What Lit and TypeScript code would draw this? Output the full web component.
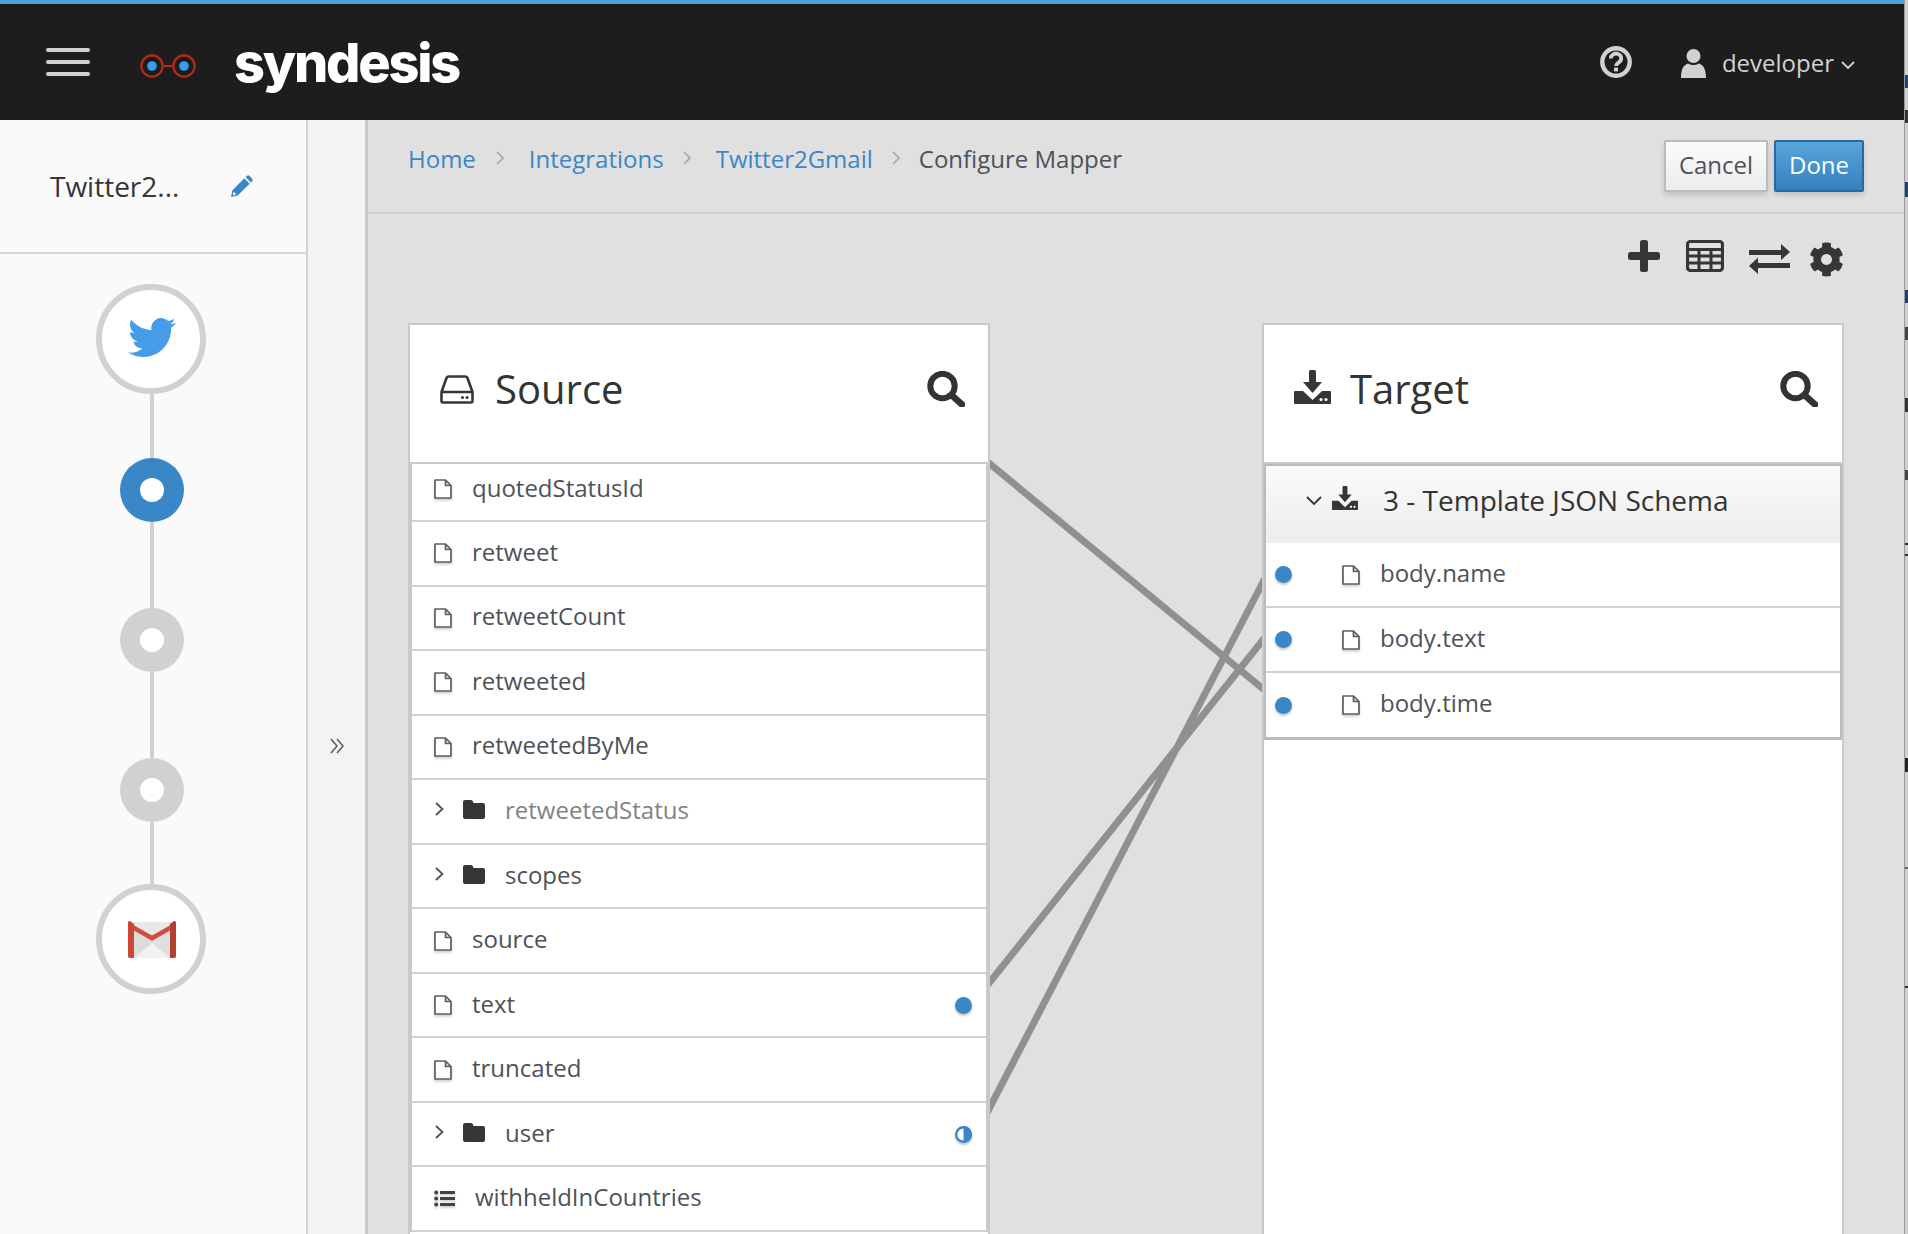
import { LitElement, html, css, svg } from "lit";
import { customElement } from "lit/decorators.js";

const fileIcon = html`<svg class="file" viewBox="0 0 18 20"><path d="M1 1H11.5L17 6.5V19H1Z M11.5 1V6.5H17" fill="#fff" stroke="#5b5f63" stroke-width="1.7" stroke-linejoin="round"/></svg>`;
const folderIcon = html`<svg class="folder" viewBox="0 0 22 19"><path d="M2 0H8Q9.5 0 10 1.5L10.5 3H20Q22 3 22 5V17Q22 19 20 19H2Q0 19 0 17V2Q0 0 2 0Z" fill="#363636"/></svg>`;
const chevronRight = html`<svg class="chev" viewBox="0 0 9 14"><path d="M1 1L7.5 7L1 13" fill="none" stroke="#4d5258" stroke-width="1.8"/></svg>`;
const listIcon = html`<svg class="list" viewBox="0 0 21 17"><g fill="#3f4246"><circle cx="2.2" cy="2.5" r="2"/><circle cx="2.2" cy="8.5" r="2"/><circle cx="2.2" cy="14.5" r="2"/><rect x="6" y="1" width="15" height="3"/><rect x="6" y="7" width="15" height="3"/><rect x="6" y="13" width="15" height="3"/></g></svg>`;
const searchIcon = html`<svg class="search" viewBox="0 0 38 36"><circle cx="15.5" cy="15" r="12.2" fill="none" stroke="#333" stroke-width="6"/><path d="M25 24.5L35 33.5" stroke="#333" stroke-width="6.5" stroke-linecap="round"/></svg>`;
const downloadIcon = (cls: string) => html`<svg class=${cls} viewBox="0 0 37 34"><g fill="#363636"><path d="M15 1.5Q15 0 16.5 0H20.5Q22 0 22 1.5V12H28L18.5 23L9 12H15Z"/><path d="M1 21H9L18.5 30L28 21H36Q37 21 37 22V33Q37 34 36 34H1Q0 34 0 33V22Q0 21 1 21Z"/></g><circle cx="27" cy="29.5" r="1.6" fill="#fff"/><circle cx="32" cy="29.5" r="1.6" fill="#fff"/></svg>`;

type Row = { name: string; kind: "file" | "folder" | "list"; dot?: "full" | "half"; muted?: boolean };
const sourceRows: Row[] = [
  { name: "quotedStatusId", kind: "file" },
  { name: "retweet", kind: "file" },
  { name: "retweetCount", kind: "file" },
  { name: "retweeted", kind: "file" },
  { name: "retweetedByMe", kind: "file" },
  { name: "retweetedStatus", kind: "folder", muted: true },
  { name: "scopes", kind: "folder" },
  { name: "source", kind: "file" },
  { name: "text", kind: "file", dot: "full" },
  { name: "truncated", kind: "file" },
  { name: "user", kind: "folder", dot: "half" },
  { name: "withheldInCountries", kind: "list" },
];
const targetRows = ["body.name", "body.text", "body.time"];
const crumbs = ["Home", "Integrations", "Twitter2Gmail"];
const edgeMarks = [
  [75, 13, "#1f3f7a"], [110, 13, "#333"], [182, 15, "#1f3f7a"], [290, 13, "#1f3f7a"], [327, 13, "#444"],
  [398, 14, "#333"], [470, 10, "#444"], [543, 2, "#333"], [554, 2, "#333"], [758, 14, "#222"], [867, 2, "#667"], [986, 2, "#333"],
] as [number, number, string][];

@customElement("app-root")
export class AppRoot extends LitElement {
  static styles = css`
    :host { display: grid; grid-template-columns: 1904px 4px; width: 1908px; height: 1234px; overflow: hidden;
      font-family: "Open Sans", "Liberation Sans", sans-serif; font-size: 24px; color: #4d5258; background: #e0e0e0; }
    * { box-sizing: border-box; }
    svg { display: block; flex: none; }
    .page { display: flex; flex-direction: column; height: 1234px; min-width: 0; }
    .edge { position: relative; background: #d0d0d0; border-left: 1px solid #9a9a9a; }
    .mark { position: absolute; left: 0; width: 3px; }

    .top { height: 120px; flex: none; background: #1d1d1d; border-top: 4px solid #4ea2d6; display: flex; align-items: center; color: #d1d1d1; padding-left: 46px; }
    .burger { display: flex; flex-direction: column; gap: 8px; width: 44px; margin-right: 50px; }
    .burger i { display: block; height: 4px; border-radius: 2px; background: #d1d1d1; }
    .glasses { width: 56px; height: 24px; margin-top: 8px; margin-right: 38px; }
    .word { font-family: Inter, Lato, "Open Sans", sans-serif; font-weight: 800; font-size: 54px; line-height: 60px; color: #fff; letter-spacing: -2.2px; margin-top: 1px; }
    .spacer { flex: 1; }
    .help { width: 32px; height: 32px; margin-right: 49px; }
    .user { width: 25px; height: 29px; margin-right: 16px; margin-top: 3px; }
    .dev { margin-right: 7px; margin-top: 2px; line-height: 30px; }
    .caret { width: 14px; height: 8px; margin-right: 49px; margin-top: 6px; }

    .body { flex: 1; display: flex; min-height: 0; }
    .side { width: 308px; flex: none; background: #fafafa; border-right: 2px solid #d1d1d1; display: flex; flex-direction: column; }
    .side-head { height: 134px; flex: none; border-bottom: 2px solid #d5d5d5; display: flex; align-items: center; padding: 0 0 0 50px; }
    .side-title { font-size: 28px; color: #363636; width: 180px; margin-top: 0; }
    .pencil { width: 23px; height: 23px; margin-top: 0; }
    .steps { display: flex; flex-direction: column; align-items: center; padding-top: 30px; padding-right: 2px; }
    .ring { width: 110px; height: 110px; border-radius: 50%; border: 6px solid #d1d1d1; background: #fff; display: flex; align-items: center; justify-content: center; margin-right: 2px; }
    .bird { width: 48px; height: 39px; margin-bottom: 3px; margin-left: 2px; }
    .gmail { width: 48px; height: 37px; margin-left: 2px; }
    .conn { width: 4px; background: #d1d1d1; }
    .node { width: 64px; height: 64px; border-radius: 50%; background: #d1d1d1; display: flex; align-items: center; justify-content: center; }
    .node.on { background: #3a87c8; }
    .node i { display: block; width: 24px; height: 24px; border-radius: 50%; background: #fff; }

    .strip { width: 60px; flex: none; background: #f3f3f3; border-right: 3px solid #c9c9c9; padding: 617px 0 0 22px; }
    .dbl { width: 14px; height: 18px; }

    .main { flex: 1; min-width: 0; display: flex; flex-direction: column; }
    .bar { height: 94px; flex: none; border-bottom: 2px solid #d1d1d1; display: flex; justify-content: space-between; align-items: flex-start; padding: 20px 40px 0 40px; }
    .crumbs { display: flex; align-items: center; gap: 22px; height: 36px; }
    .crumbs a { color: #3a87c8; }
    .crumbs a:not(:first-child) { margin-left: 1px; margin-right: -1px; }
    .crumbs span { margin-left: -5px; }
    .sep { width: 8px; height: 14px; margin-left: -2px; margin-right: 2px; }
    .btns { display: flex; gap: 6px; }
    .btn { height: 52px; display: flex; align-items: center; justify-content: center; border-radius: 2px; font-weight: 500; padding-bottom: 3px; box-shadow: 0 3px 5px rgba(0,0,0,.14); }
    .cancel { width: 104px; border: 2px solid #bbb; background: linear-gradient(#fbfbfb, #ececec); color: #4d5258; }
    .done { width: 90px; border: 2px solid #28699f; background: linear-gradient(#57a6da, #3580c0); color: #fff; }

    .tools { height: 109px; flex: none; display: flex; justify-content: flex-end; align-items: flex-start; padding: 26px 60px 0 0; }
    .t-plus { width: 32px; height: 32px; }
    .t-table { width: 38px; height: 32px; margin-left: 26px; }
    .t-swap { width: 41px; height: 30px; margin-left: 25px; margin-top: 4px; }
    .t-gear { width: 35px; height: 35px; margin-left: 19px; margin-top: 2px; }

    .canvas { flex: 1; min-height: 0; display: flex; padding-left: 40px; }
    .panel { background: #fff; border: 2px solid #c9c9c9; border-bottom: 0; display: flex; flex-direction: column; overflow: hidden; }
    .panel.src { width: 582px; }
    .panel.tgt { width: 582px; }
    .links { width: 272px; height: 911px; flex: none; }
    .head { height: 139px; flex: none; border-bottom: 2px solid #c9c9c9; display: flex; align-items: center; padding: 0 23px 8px 30px; }
    .tgt .head { padding-right: 24px; }
    .head h2 { margin: -1px 0 0 0; font-size: 40px; font-weight: 400; color: #333; flex: 1; line-height: 50px; }
    .hdd { width: 34px; height: 29px; margin-right: 21px; }
    .dl-big { width: 37px; height: 34px; margin-right: 19px; margin-top: -6px; }
    .search { width: 38px; height: 36px; margin-top: -2px; }

    .rows { border: 2px solid #c9c9c9; border-width: 0 2px; }
    .row { height: 64.55px; border-bottom: 2px solid #d1d1d1; display: flex; align-items: center; padding: 0 14px 0 22px; }
    .row.first { height: 58px; padding-bottom: 6px; }
    .row span { flex: 1; line-height: 32px; margin-top: -3px; }
    .row.muted span { color: #7f8285; margin-top: -2px; }
    .file { width: 18px; height: 20px; margin-right: 20px; filter: drop-shadow(0 2px 1px rgba(0,0,0,.18)); }
    .chev { width: 9px; height: 14px; margin-left: 1px; margin-right: 19px; margin-top: -4px; }
    .folder { width: 22px; height: 19px; margin-right: 20px; margin-top: -4px; }
    .list { width: 21px; height: 17px; margin-right: 20px; filter: drop-shadow(0 2px 1px rgba(0,0,0,.18)); }
    .dot { width: 17px; height: 17px; filter: drop-shadow(0 2px 1px rgba(0,0,0,.22)); }

    .group { border: 2px solid #bbb; border-bottom-width: 3px; }
    .ghead { height: 77px; background: linear-gradient(#fafafa, #ededed); display: flex; align-items: center; padding: 0 0 10px 40px; font-size: 28px; color: #333; }
    .gchev { width: 16px; height: 9px; margin-right: 10px; margin-top: 2px; }
    .dl-small { width: 26px; height: 24px; margin-right: 25px; margin-top: -3px; }
    .trow { height: 65px; border-bottom: 2px solid #d1d1d1; display: flex; align-items: center; padding-left: 9px; }
    .trow:last-child { border-bottom: 0; height: 64px; }
    .trow .file { margin-left: 50px; margin-right: 20px; }
    .trow span { line-height: 32px; margin-top: -4px; }
  `;

  private renderSourceRow(r: Row, i: number) {
    return html`<div class="row ${i === 0 ? "first" : ""} ${r.muted ? "muted" : ""}">
      ${r.kind === "file" ? fileIcon : r.kind === "list" ? listIcon : html`${chevronRight}${folderIcon}`}
      <span>${r.name}</span>
      ${r.dot === "full"
        ? html`<svg class="dot" viewBox="0 0 17 17"><circle cx="8.5" cy="8.5" r="8.5" fill="#3a87c8"/></svg>`
        : r.dot === "half"
        ? html`<svg class="dot" viewBox="0 0 17 17"><circle cx="8.5" cy="8.5" r="7.3" fill="#fff" stroke="#3a87c8" stroke-width="2.4"/><path d="M8.5 0A8.5 8.5 0 0 1 8.5 17Z" fill="#3a87c8"/></svg>`
        : ""}
    </div>`;
  }

  render() {
    return html`
      <div class="page">
        <header class="top">
          <div class="burger"><i></i><i></i><i></i></div>
          <svg class="glasses" viewBox="0 0 56 24"><g fill="none" stroke="#b52a1b" stroke-width="2.2"><circle cx="12" cy="12" r="10.6"/><circle cx="44" cy="12" r="10.6"/><path d="M22.6 12H33.4"/></g><circle cx="12" cy="12" r="4.8" fill="#3a9bf0"/><circle cx="44" cy="12" r="4.8" fill="#3a9bf0"/></svg>
          <div class="word">syndesis</div>
          <div class="spacer"></div>
          <svg class="help" viewBox="0 0 32 32"><circle cx="16" cy="16" r="13.7" fill="none" stroke="#d1d1d1" stroke-width="4.4"/><path d="M10.800 12.500a5.200 4.800 0 1 1 8 3.900c-1.900 1.300-2.800 2-2.800 3.500" fill="none" stroke="#d1d1d1" stroke-width="3.800"/><rect x="14" y="21.600" width="4" height="3.800" fill="#d1d1d1"/></svg>
          <svg class="user" viewBox="0 0 25 29"><circle cx="12.5" cy="7" r="7" fill="#d1d1d1"/><path d="M0 29C0 20 2.500 16 7 14.500Q12.500 17.500 18 14.500C22.500 16 25 20 25 29Z" fill="#d1d1d1"/></svg>
          <div class="dev">developer</div>
          <svg class="caret" viewBox="0 0 14 8"><path d="M1 1L7 7L13 1" fill="none" stroke="#d1d1d1" stroke-width="1.8"/></svg>
        </header>
        <div class="body">
          <aside class="side">
            <div class="side-head">
              <div class="side-title">Twitter2...</div>
              <svg class="pencil" viewBox="0 0 24 24"><path fill="#3a87c8" d="M1 23L2.500 16L15 3.500L20.500 9L8 21.500ZM16.300 2.200L17.800.800Q19 -.2 20.200.800L23.200 3.800Q24.200 5 23.200 6.200L21.800 7.700Z"/><path d="M3.800 17.500L6.500 20.200L4 21L3 20Z" fill="#fff"/></svg>
            </div>
            <div class="steps">
              <div class="ring"><svg class="bird" viewBox="0 0 24 19.500"><path fill="#469ce8" transform="translate(0,-2.250)" d="M23.953 4.570a10 10 0 01-2.825.775 4.958 4.958 0 002.163-2.723c-.951.555-2.005.959-3.127 1.184a4.920 4.920 0 00-8.384 4.482C7.690 8.095 4.067 6.130 1.640 3.162a4.822 4.822 0 00-.666 2.475c0 1.710.870 3.213 2.188 4.096a4.904 4.904 0 01-2.228-.616v.060a4.923 4.923 0 003.946 4.827 4.996 4.996 0 01-2.212.085 4.936 4.936 0 004.604 3.417 9.867 9.867 0 01-6.102 2.105c-.390 0-.779-.023-1.170-.067a13.995 13.995 0 007.557 2.209c9.053 0 13.998-7.496 13.998-13.985 0-.210 0-.420-.015-.630A9.935 9.935 0 0024 4.590z"/></svg></div>
              <div class="conn" style="height:64px"></div>
              <div class="node on"><i></i></div>
              <div class="conn" style="height:86px"></div>
              <div class="node"><i></i></div>
              <div class="conn" style="height:86px"></div>
              <div class="node"><i></i></div>
              <div class="conn" style="height:62px"></div>
              <div class="ring"><svg class="gmail" viewBox="0 0 48 37"><path d="M0 1H48V37H0Z" fill="#e8e8e8"/><path d="M6 37L24 22L42 37Z" fill="#f2f2f2"/><path d="M6 8L24 22L6 37Z" fill="#dcdcdc"/><path d="M42 8L24 22L42 37Z" fill="#dfdfdf"/><path d="M0 1L24 14.500L48 1V6L24 20L0 6Z" fill="#d0503f"/><path d="M0 2Q0 0 2 0L6 3V37H2Q0 37 0 35Z" fill="#c9483a"/><path d="M48 2Q48 0 46 0L42 3V37H46Q48 37 48 35Z" fill="#b33f31"/></svg></div>
            </div>
          </aside>
          <div class="strip"><svg class="dbl" viewBox="0 0 14 18"><path d="M1 2L7 9L1 16M7 2L13 9L7 16" fill="none" stroke="#55585c" stroke-width="1.500"/></svg></div>
          <main class="main">
            <div class="bar">
              <div class="crumbs">
                ${crumbs.map((c) => html`<a>${c}</a><svg class="sep" viewBox="0 0 8 14"><path d="M1 1L7 7L1 13" fill="none" stroke="#a8a8a8" stroke-width="1.600"/></svg>`)}
                <span>Configure Mapper</span>
              </div>
              <div class="btns"><div class="btn cancel">Cancel</div><div class="btn done">Done</div></div>
            </div>
            <div class="tools">
              <svg class="t-plus" viewBox="0 0 32 32"><path d="M12 2.500Q12 0 14.500 0H17.500Q20 0 20 2.500V12H29.500Q32 12 32 14.500V17.500Q32 20 29.500 20H20V29.500Q20 32 17.500 32H14.500Q12 32 12 29.500V20H2.500Q0 20 0 17.500V14.500Q0 12 2.500 12H12Z" fill="#363636"/></svg>
              <svg class="t-table" viewBox="0 0 38 32"><rect x="1.500" y="1.500" width="35" height="29" rx="3" fill="none" stroke="#363636" stroke-width="3.200"/><path d="M1.500 9.500H36.500M1.500 16H36.500M1.500 23H36.500M13 9V31M25 9V31" stroke="#363636" stroke-width="3"/></svg>
              <svg class="t-swap" viewBox="0 0 41 30"><g fill="#363636"><path d="M0 6H32V0L41 8L32 16V11H0Z"/><path d="M41 19H9V13.500L0 22L9 30V24H41Z"/></g></svg>
              <svg class="t-gear" viewBox="0 0 512 512"><path fill="#363636" d="M487.4 315.7l-42.6-24.600c4.300-23.200 4.300-47 0-70.200l42.600-24.600c4.900-2.800 7.100-8.600 5.500-14-11.100-35.600-30-67.800-54.700-94.600-3.800-4.100-10-5.100-14.800-2.300L380.800 110c-17.900-15.400-38.500-27.300-60.800-35.100V25.800c0-5.600-3.900-10.500-9.400-11.700-36.700-8.200-74.300-7.800-109.200 0-5.500 1.200-9.400 6.100-9.400 11.700V75c-22.200 7.900-42.800 19.800-60.800 35.100L88.700 85.500c-4.900-2.800-11-1.900-14.800 2.300-24.700 26.700-43.600 58.900-54.700 94.600-1.700 5.400.6 11.200 5.500 14L67.300 221c-4.300 23.200-4.300 47 0 70.200l-42.600 24.600c-4.900 2.800-7.100 8.600-5.500 14 11.100 35.600 30 67.800 54.700 94.600 3.800 4.100 10 5.100 14.800 2.300l42.600-24.600c17.900 15.400 38.500 27.300 60.800 35.100v49.200c0 5.600 3.900 10.500 9.400 11.700 36.700 8.200 74.300 7.800 109.200 0 5.500-1.200 9.400-6.100 9.400-11.700v-49.200c22.200-7.900 42.800-19.800 60.800-35.100l42.600 24.600c4.900 2.800 11 1.900 14.800-2.300 24.700-26.700 43.600-58.900 54.700-94.600 1.500-5.500-.7-11.300-5.600-14.100zM256 336c-44.100 0-80-35.900-80-80s35.900-80 80-80 80 35.900 80 80-35.900 80-80 80z"/></svg>
            </div>
            <div class="canvas">
              <section class="panel src">
                <div class="head">
                  <svg class="hdd" viewBox="0 0 34 29"><path d="M1.500 17L6.500 3Q7 1.500 9 1.500H25Q27 1.500 27.500 3L32.500 17V26Q32.500 27.500 31 27.500H3Q1.500 27.500 1.500 26ZM1.500 17H32.500" fill="none" stroke="#363636" stroke-width="2.600" stroke-linejoin="round"/><circle cx="22.500" cy="22.500" r="1.500" fill="#363636"/><circle cx="27" cy="22.500" r="1.500" fill="#363636"/></svg>
                  <h2>Source</h2>
                  ${searchIcon}
                </div>
                <div class="rows">${sourceRows.map((r, i) => this.renderSourceRow(r, i))}</div>
              </section>
              <svg class="links" viewBox="0 0 272 911">
                ${svg`<g stroke="#8f9091" stroke-width="7"><line x1="-10" y1="132.800" x2="282" y2="373.200"/><line x1="-10" y1="671.500" x2="282" y2="305.500"/><line x1="-10" y1="803.200" x2="282" y2="241.800"/></g>`}
              </svg>
              <section class="panel tgt">
                <div class="head">
                  ${downloadIcon("dl-big")}
                  <h2>Target</h2>
                  ${searchIcon}
                </div>
                <div class="group">
                  <div class="ghead">
                    <svg class="gchev" viewBox="0 0 16 9"><path d="M1 1L8 8L15 1" fill="none" stroke="#333" stroke-width="1.800"/></svg>
                    ${downloadIcon("dl-small")}
                    3 - Template JSON Schema
                  </div>
                  ${targetRows.map((n) => html`<div class="trow"><svg class="dot" viewBox="0 0 17 17"><circle cx="8.500" cy="8.500" r="8.500" fill="#3a87c8"/></svg>${fileIcon}<span>${n}</span></div>`)}
                </div>
              </section>
            </div>
          </main>
        </div>
      </div>
      <div class="edge">${edgeMarks.map(([y, h, c]) => html`<div class="mark" style="top:${y}px;height:${h}px;background:${c}"></div>`)}</div>
    `;
  }
}
